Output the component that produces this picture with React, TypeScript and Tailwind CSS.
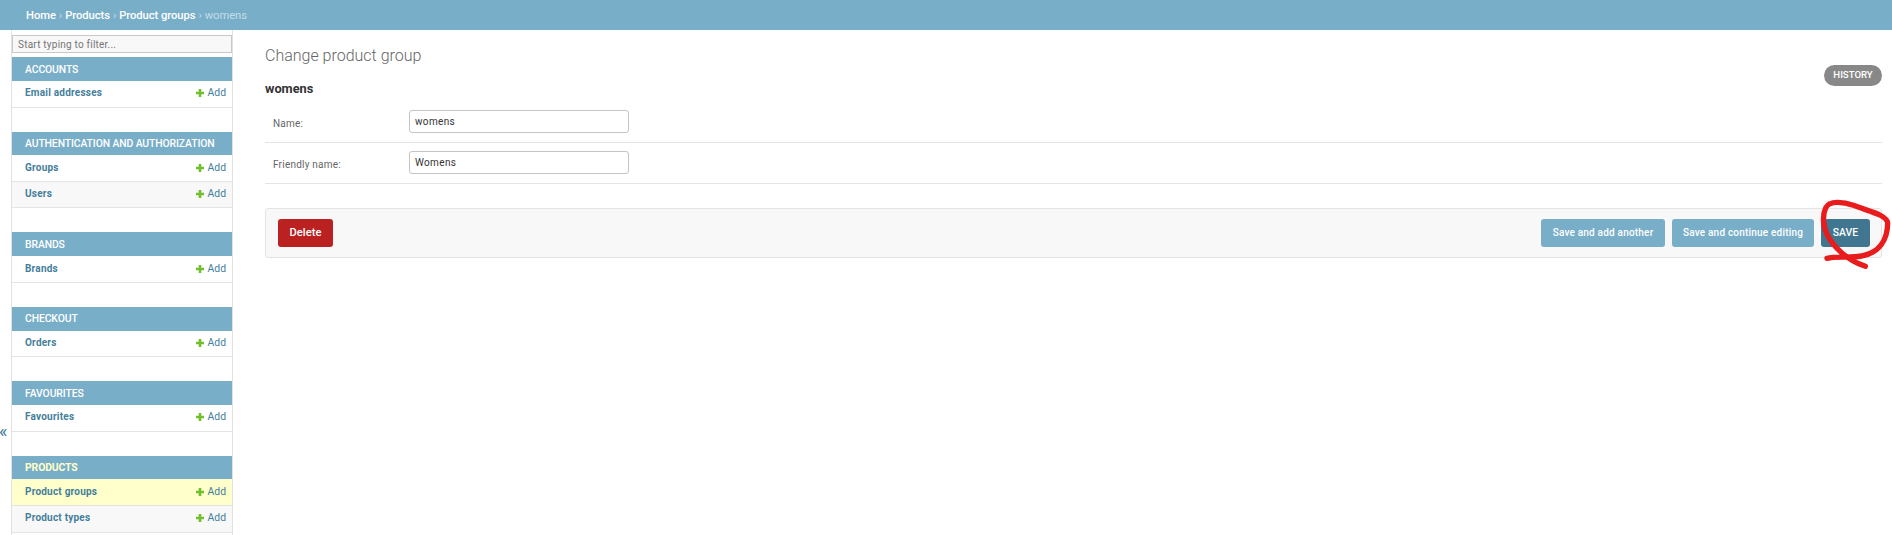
import React from "react";

type Row = { name: string; h: string; current?: boolean; alt?: boolean };
type App = { title: string; h: string; current?: boolean; rows: Row[] };

const apps: App[] = [
  { title: "Accounts", h: "h-6", rows: [{ name: "Email addresses", h: "h-[27px] pb-[2px]" }] },
  {
    title: "Authentication and Authorization",
    h: "h-[23px]",
    rows: [
      { name: "Groups", h: "h-[27px]" },
      { name: "Users", h: "h-[26px] pb-px", alt: true },
    ],
  },
  { title: "Brands", h: "h-6", rows: [{ name: "Brands", h: "h-[27px]" }] },
  { title: "Checkout", h: "h-6 pb-px", rows: [{ name: "Orders", h: "h-[26px] pb-px" }] },
  { title: "Favourites", h: "h-6", rows: [{ name: "Favourites", h: "h-[27px] pb-[2px]" }] },
  {
    title: "Products",
    h: "h-[23px]",
    current: true,
    rows: [
      { name: "Product groups", h: "h-[27px]", current: true },
      { name: "Product types", h: "h-[27px] pb-[2px]", alt: true },
    ],
  },
];

function Plus() {
  return (
    <svg className="mr-1 h-2 w-2" viewBox="0 0 8 8" aria-hidden="true">
      <path d="M2.7 0h2.6v2.7H8v2.6H5.3V8H2.7V5.3H0V2.7h2.7z" fill="#70bf2b" />
    </svg>
  );
}

function Sidebar() {
  return (
    <nav className="flex h-[505px] w-[222px] shrink-0 flex-col overflow-hidden border-x border-[#e2e2e2] pt-[5px]">
      <input
        className="mb-1 h-[18px] w-full shrink-0 border border-[#c8c8c8] bg-[#f8f8f8] px-[5px] pt-px text-[10px] tracking-[0.22px] outline-none placeholder:text-[#757575]"
        placeholder="Start typing to filter..."
      />
      {apps.map((app) => (
        <section key={app.title} className="mb-6 shrink-0">
          <h2
            className={`${app.h} flex items-center bg-[#79aec8] pl-[13px] pt-px text-[10.4px] tracking-[-0.11px] uppercase ${
              app.current ? "font-bold text-[#ffffcc]" : "font-medium text-white"
            }`}
          >
            {app.title}
          </h2>
          {app.rows.map((row) => (
            <div
              key={row.name}
              className={`${row.h} flex items-center justify-between border-b border-[#e4e4e4] pr-[6px] pl-[13px] text-[10.4px] text-[#447e9b] ${
                row.current ? "bg-[#ffffcc]" : row.alt ? "bg-[#f8f8f8]" : "bg-white"
              }`}
            >
              <a className="pb-[2px] text-[10px] font-bold tracking-[0.22px]">{row.name}</a>
              <a className="flex items-center">
                <Plus />
                Add
              </a>
            </div>
          ))}
        </section>
      ))}
    </nav>
  );
}

function Field({ label, value }: { label: string; value: string }) {
  return (
    <div className="flex h-[41px] items-start border-b border-[#e4e4e4] pt-[8px] pl-[8px]">
      <label className="w-[136px] pt-[6px] text-[10px] leading-4 tracking-[0.22px] text-[#666]">
        {label}
      </label>
      <input
        className="h-[23px] w-[220px] rounded-[3px] border border-[#c4c4c4] px-[5px] text-[10px] tracking-[0.35px] text-[#333] outline-none"
        defaultValue={value}
      />
    </div>
  );
}

export default function AdminPage() {
  return (
    <div className="relative h-[535px] w-[1892px] overflow-hidden bg-white font-[Roboto,sans-serif] text-[#333]">
      <header className="flex h-[30px] items-center gap-[3px] bg-[#79aec8] pt-[2px] pl-[26px] text-[11.2px] tracking-[-0.05px] text-[#c4dce8]">
        <a className="font-medium text-white">Home</a>
        <span>›</span>
        <a className="font-medium text-white">Products</a>
        <span>›</span>
        <a className="font-medium text-white">Product groups</a>
        <span>›</span>
        <span>womens</span>
      </header>
      <div className="flex">
        <button className="flex h-[505px] w-[11px] shrink-0 items-end pb-[94px] text-[18px] leading-5 text-[#447e9b]">
          <span className="-ml-px">«</span>
        </button>
        <Sidebar />
        <main className="ml-8 w-[1617px]">
          <h1 className="pt-[16px] text-[16px] leading-5 font-light text-[#666]">
            Change product group
          </h1>
          <div className="flex h-[36px] items-start justify-between">
            <h2 className="pt-[15px] text-[12.8px] leading-4 font-bold">womens</h2>
            <a className="-mt-px flex h-[21px] w-[58px] items-center justify-center rounded-full bg-[#888] text-[9.6px] font-medium text-white">
              HISTORY
            </a>
          </div>
          <Field label="Name:" value="womens" />
          <Field label="Friendly name:" value="Womens" />
          <div className="mt-6 flex h-[50px] items-center gap-[7px] rounded-[3px] border border-[#e4e4e4] bg-[#f8f8f8] pr-[11px] pl-3">
            <a className="mr-auto flex h-7 w-[55px] items-center justify-center rounded-[3px] bg-[#ba2121] pt-px text-[11.2px] font-medium text-white">
              Delete
            </a>
            <button className="h-7 w-[124px] rounded-[3px] bg-[#79aec8] pb-[2px] text-[10px] font-medium tracking-[0.2px] text-white">
              Save and add another
            </button>
            <button className="h-7 w-[142px] rounded-[3px] bg-[#79aec8] pb-[2px] text-[10px] font-medium tracking-[0.2px] text-white">
              Save and continue editing
            </button>
            <button className="h-7 w-[49px] rounded-[3px] bg-[#417690] text-[10.4px] font-medium text-white">
              SAVE
            </button>
          </div>
        </main>
      </div>
      <svg
        className="pointer-events-none absolute top-[180px] left-[1500px]"
        width="392"
        height="110"
        viewBox="0 0 1176 330"
        fill="none"
        stroke="#e81c1c"
        strokeWidth="16"
        strokeLinecap="round"
        strokeLinejoin="round"
      >
        <path d="M981 235C1010 227 1050 236 1090 227C1138 216 1162 180 1163 130C1162 105 1110 95 1060 76C1030 65 988 61 978 82C966 105 969 140 982 165C1000 200 1040 240 1096 259" />
      </svg>
    </div>
  );
}
